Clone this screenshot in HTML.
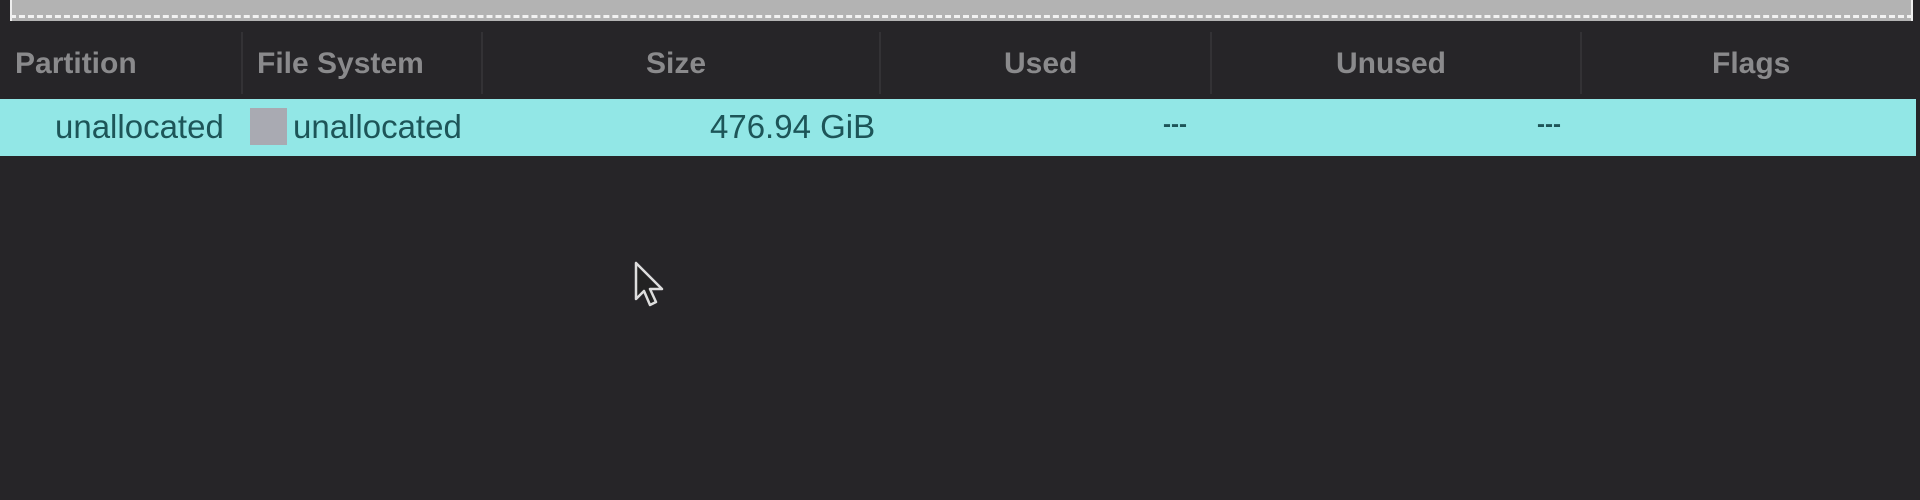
<!DOCTYPE html>
<html><head><style>
body{margin:0;width:1920px;height:500px;background:#262528;position:relative;overflow:hidden;font-family:"Liberation Sans",sans-serif}
.a{position:absolute;white-space:nowrap}
.h{color:#8a8a8c;font-weight:bold;font-size:30px;top:46px;line-height:36px}
.sep{position:absolute;top:32px;height:62px;width:2px;background:#333235}
.r{color:#1d5558;font-size:33px;top:108px;line-height:38px}
</style></head><body>
<div class="a" style="left:10px;top:0;width:1903px;height:21px;background:#b3b3b3"></div>
<div class="a" style="left:10px;top:15px;width:1903px;height:0;border-top:3px dashed #f2f2f2"></div>
<div class="a" style="left:10px;top:0;width:2px;height:21px;background:#eee"></div>
<div class="a" style="left:1911px;top:0;width:2px;height:21px;background:#eee"></div>
<div class="sep" style="left:241px"></div><div class="sep" style="left:481px"></div><div class="sep" style="left:879px"></div><div class="sep" style="left:1210px"></div><div class="sep" style="left:1580px"></div>
<div class="a h" style="left:15px">Partition</div>
<div class="a h" style="left:257px">File System</div>
<div class="a h" style="left:646px">Size</div>
<div class="a h" style="left:1004px">Used</div>
<div class="a h" style="left:1336px">Unused</div>
<div class="a h" style="left:1712px">Flags</div>
<div class="a" style="left:0;top:99px;width:1916px;height:57px;background:#92e7e6"></div>
<div class="a r" style="left:55px">unallocated</div>
<div class="a" style="left:250px;top:108px;width:37px;height:37px;background:#a9aab2"></div>
<div class="a r" style="left:293px">unallocated</div>
<div class="a r" style="left:710px">476.94 GiB</div>
<div class="a r" style="left:1163px;top:106px;font-size:24px;font-weight:bold">---</div>
<div class="a r" style="left:1537px;top:106px;font-size:24px;font-weight:bold">---</div>
<svg class="a" style="left:634px;top:261px" width="34" height="48" viewBox="0 0 34 48"><path d="M2 2 L2 38 L10 30 L16 44 L22 41 L16 28 L28 28 Z" fill="#222" stroke="#ddd" stroke-width="2.5" stroke-linejoin="round"/></svg>
</body></html>
